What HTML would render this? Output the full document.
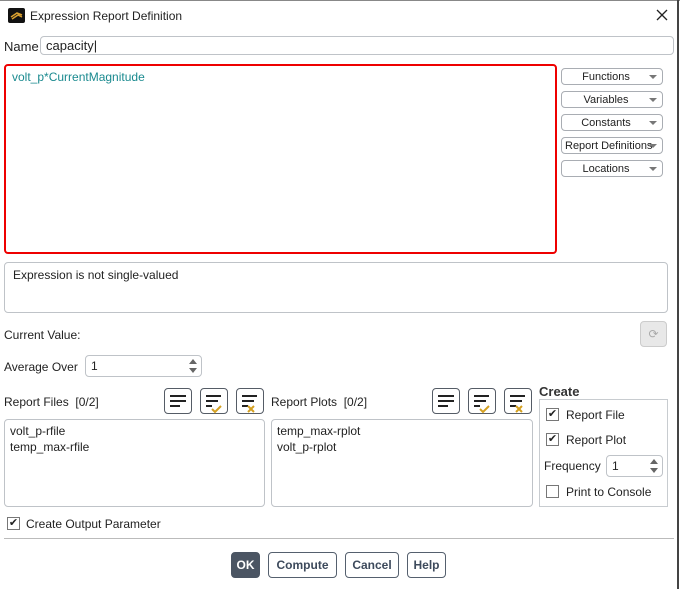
<!DOCTYPE html>
<html><head><style>
*{box-sizing:border-box;margin:0;padding:0}
body{width:680px;height:589px;background:#fff;font-family:"Liberation Sans",sans-serif;font-size:12px;color:#222;position:relative;overflow:hidden}
.a{position:absolute}
.box{position:absolute;border:1px solid #bfc3c8;border-radius:4px;background:#fff}
.dd{position:absolute;left:561px;width:102px;height:17px;border:1px solid #a9adb3;border-radius:4px;background:#fff;font-size:11px;text-align:center;line-height:17px;padding-right:12px}
.dd:after{content:"";position:absolute;right:5px;top:6px;border-left:4px solid transparent;border-right:4px solid transparent;border-top:4px solid #777}
.ib{position:absolute;width:28px;height:26px;border:1px solid #555c66;border-radius:4px;background:#fff}
.btn{position:absolute;top:552px;height:26px;border:1px solid #55606e;border-radius:4px;background:#fff;font-weight:bold;color:#3d4a5c;text-align:center;line-height:24px;font-size:12px}
.cb{position:absolute;width:13px;height:13px;border:1px solid #777;background:#fff;font-size:11px;line-height:11px;text-align:center}
.spin{position:absolute;border:1px solid #bfc3c8;border-radius:4px;background:#fff;padding-left:5px}
.spin:after{content:"";position:absolute;right:4px;top:3px;border-left:4px solid transparent;border-right:4px solid transparent;border-bottom:5px solid #666}
.spin:before{content:"";position:absolute;right:4px;bottom:3px;border-left:4px solid transparent;border-right:4px solid transparent;border-top:5px solid #666}
</style></head><body>
<div class="a" style="left:0;top:0;width:680px;height:1px;background:#888"></div>
<div class="a" style="left:677px;top:0;width:2px;height:589px;background:#444"></div>
<div class="a" style="left:8px;top:8px;width:17px;height:15px;background:#111;border-radius:2px"><svg width="17" height="15"><path d="M3 9 L9 5 L14 7 M4 11 L10 7 L14 9" stroke="#d9a030" stroke-width="1.5" fill="none"/></svg></div>
<div class="a" style="left:30px;top:9px">Expression Report Definition</div>
<svg class="a" style="left:656px;top:9px" width="12" height="12"><path d="M1 1L11 11M11 1L1 11" stroke="#222" stroke-width="1.3"/></svg>
<div class="a" style="left:4px;top:39px;font-size:13px">Name</div>
<div class="box" style="left:40px;top:36px;width:634px;height:19px;padding:1px 5px;font-size:13px">capacity|</div>
<div class="a" style="left:4px;top:64px;width:553px;height:190px;border:2px solid #e00;border-radius:4px;background:#fff;padding:4px 6px;color:#1a8a8f">volt_p*CurrentMagnitude</div>
<div class="dd" style="top:68px">Functions</div>
<div class="dd" style="top:91px">Variables</div>
<div class="dd" style="top:114px">Constants</div>
<div class="dd" style="top:137px;padding-right:8px;text-align:left;padding-left:3px">Report Definitions</div>
<div class="dd" style="top:160px">Locations</div>
<div class="box" style="left:4px;top:262px;width:664px;height:51px;padding:5px 8px">Expression is not single-valued</div>
<div class="a" style="left:4px;top:328px">Current Value:</div>
<div class="a" style="left:640px;top:321px;width:27px;height:26px;border:1px solid #ccc;border-radius:4px;background:#e8e8e8;color:#aaa;text-align:center;line-height:24px">⟳</div>
<div class="a" style="left:4px;top:360px">Average Over</div>
<div class="spin" style="left:85px;top:355px;width:117px;height:22px;line-height:20px">1</div>
<div class="a" style="left:4px;top:395px">Report Files &nbsp;[0/2]</div>
<div class="a" style="left:271px;top:395px">Report Plots &nbsp;[0/2]</div>
<div class="ib" style="left:164px;top:388px"></div>
<div class="ib" style="left:200px;top:388px"></div>
<div class="ib" style="left:236px;top:388px"></div>
<div class="ib" style="left:432px;top:388px"></div>
<div class="ib" style="left:468px;top:388px"></div>
<div class="ib" style="left:504px;top:388px"></div>
<svg class="a" style="left:0;top:0" width="680" height="589">
<g stroke="#222" stroke-width="2">
<path d="M170 396h16M170 401h16M170 406h10"/>
<path d="M206 396h15M206 401h12M206 406h6"/><path d="M212 409l3 3 6-6" stroke="#d4a020" fill="none"/>
<path d="M242 396h15M242 401h12M242 406h6"/><path d="M248 406l6 6M254 406l-6 6" stroke="#d4a020"/>
<path d="M438 396h16M438 401h16M438 406h10"/>
<path d="M474 396h15M474 401h12M474 406h6"/><path d="M480 409l3 3 6-6" stroke="#d4a020" fill="none"/>
<path d="M510 396h15M510 401h12M510 406h6"/><path d="M516 406l6 6M522 406l-6 6" stroke="#d4a020"/>
</g></svg>
<div class="box" style="left:4px;top:419px;width:261px;height:88px;padding:3px 5px;line-height:16px">volt_p-rfile<br>temp_max-rfile</div>
<div class="box" style="left:271px;top:419px;width:262px;height:88px;padding:3px 5px;line-height:16px">temp_max-rplot<br>volt_p-rplot</div>
<div class="a" style="left:539px;top:384px;font-weight:bold;font-size:13px;color:#333">Create</div>
<div class="a" style="left:539px;top:399px;width:129px;height:108px;border:1px solid #c8ccd0"></div>
<div class="cb" style="left:546px;top:408px">✔</div><div class="a" style="left:566px;top:408px">Report File</div>
<div class="cb" style="left:546px;top:433px">✔</div><div class="a" style="left:566px;top:433px">Report Plot</div>
<div class="a" style="left:544px;top:459px">Frequency</div>
<div class="spin" style="left:606px;top:455px;width:57px;height:22px;line-height:20px">1</div>
<div class="cb" style="left:546px;top:485px"></div><div class="a" style="left:566px;top:485px">Print to Console</div>
<div class="cb" style="left:7px;top:517px">✔</div><div class="a" style="left:26px;top:517px">Create Output Parameter</div>
<div class="a" style="left:4px;top:538px;width:670px;height:1px;background:#bbb"></div>
<div class="btn" style="left:231px;width:29px;background:#4b5563;color:#fff;border-color:#4b5563">OK</div>
<div class="btn" style="left:268px;width:69px">Compute</div>
<div class="btn" style="left:345px;width:54px">Cancel</div>
<div class="btn" style="left:407px;width:39px">Help</div>
</body></html>
